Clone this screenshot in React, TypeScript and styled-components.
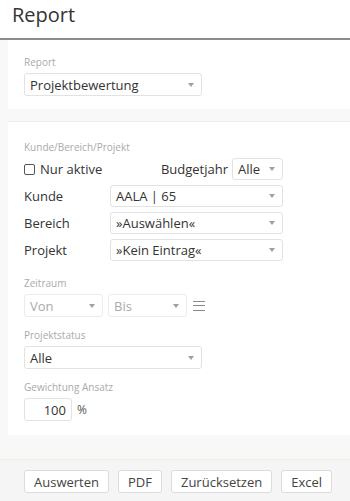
import React from 'react'
import styled, { createGlobalStyle } from 'styled-components'

const GlobalStyle = createGlobalStyle`
  html, body {
    margin: 0;
    padding: 0;
    background: #f8f8f8;
    font-family: 'Open Sans', 'Liberation Sans', sans-serif;
    color: #333;
  }
  * {
    box-sizing: border-box;
  }
`

const Page = styled.div`
  width: 350px;
  height: 501px;
  display: flex;
  flex-direction: column;
  overflow: hidden;
`

const Header = styled.header`
  height: 40px;
  background: #fff;
  border-bottom: 2px solid #8c8c8c;
  padding: 2px 0 0 12px;
`

const Title = styled.h1`
  margin: 0;
  font-size: 20px;
  font-weight: 400;
  line-height: 26px;
  color: #333;
`

const Main = styled.main`
  flex: 1;
  display: flex;
  flex-direction: column;
  padding-left: 8px;
`

const Card = styled.section<{ $top: number; $bottom: number; $first?: boolean }>`
  background: #fff;
  padding: ${(p) => p.$top}px 16px ${(p) => p.$bottom}px 16px;
  border-top: ${(p) => (p.$first ? 'none' : '1px solid #ececec')};
  margin-top: ${(p) => (p.$first ? 0 : 12)}px;
`

const FieldLabel = styled.div<{ $gap?: number }>`
  font-size: 10px;
  line-height: 12px;
  color: #aaa;
  margin-top: ${(p) => p.$gap ?? 0}px;
  margin-bottom: 5px;
`

const SelectBox = styled.div<{ $width: number; $height: number; $muted?: boolean }>`
  position: relative;
  width: ${(p) => p.$width}px;
  height: ${(p) => p.$height}px;
  border: 1px solid ${(p) => (p.$muted ? '#ececec' : '#e2e2e2')};
  border-radius: 3px;
  background: #fff;
  padding: 0 20px 0 5px;
  display: flex;
  align-items: center;
  font-size: 13px;
  color: ${(p) => (p.$muted ? '#aaa' : '#333')};
  white-space: nowrap;
`

const Caret = styled.span`
  position: absolute;
  right: 7px;
  top: 50%;
  margin-top: -2px;
  width: 0;
  height: 0;
  border-left: 3.5px solid transparent;
  border-right: 3.5px solid transparent;
  border-top: 4px solid #a0a0a0;
`

type SelectProps = { value: string; width: number; height?: number; muted?: boolean }

const Select = ({ value, width, height = 23, muted }: SelectProps) => (
  <SelectBox $width={width} $height={height} $muted={muted}>
    {value}
    <Caret />
  </SelectBox>
)

const FilterGrid = styled.div`
  display: grid;
  grid-template-columns: 86px 173px;
  grid-auto-rows: 22px;
  row-gap: 5px;
  align-items: center;
  width: 259px;
`

const TopRow = styled.div`
  grid-column: 1 / span 2;
  display: flex;
  align-items: center;
  height: 22px;
`

const CheckLabel = styled.label`
  display: flex;
  align-items: center;
  gap: 5px;
  font-size: 13px;
  color: #333;
  flex: 1;
`

const CheckBox = styled.span`
  width: 11px;
  height: 11px;
  border: 1px solid #555;
  border-radius: 2px;
  background: #fff;
`

const BudgetLabel = styled.span`
  font-size: 13px;
  color: #333;
  margin-right: 4px;
`

const RowLabel = styled.span`
  font-size: 13px;
  color: #333;
`

const Inline = styled.div`
  display: flex;
  align-items: center;
  gap: 5px;
`

const MenuIcon = styled.span`
  width: 12px;
  height: 10px;
  margin-left: 1px;
  border-top: 1.5px solid #8a8a8a;
  border-bottom: 1.5px solid #8a8a8a;
  position: relative;
  &::after {
    content: '';
    position: absolute;
    left: 0;
    right: 0;
    top: 3px;
    border-top: 1.5px solid #8a8a8a;
  }
`

const NumberInput = styled.div`
  width: 48px;
  height: 23px;
  border: 1px solid #e2e2e2;
  border-radius: 3px;
  display: flex;
  align-items: center;
  justify-content: flex-end;
  padding-right: 5px;
  font-size: 13px;
  color: #333;
`

const Unit = styled.span`
  font-size: 12px;
  color: #555;
`

const Footer = styled.footer`
  margin-top: auto;
  height: 42px;
  background: #f5f5f5;
  border-top: 1px solid #f1f1e2;
  padding: 10px 0 0 24px;
  display: flex;
  gap: 9px;
  align-items: flex-start;
`

const Button = styled.button`
  height: 23px;
  padding: 0 9px;
  background: #fff;
  border: 1px solid #dcdcdc;
  border-radius: 3px;
  font-family: inherit;
  font-size: 13px;
  color: #444;
`

export default function App() {
  return (
    <Page>
      <GlobalStyle />
      <Header>
        <Title>Report</Title>
      </Header>
      <Main>
        <Card $first $top={16} $bottom={13}>
          <FieldLabel>Report</FieldLabel>
          <Select value="Projektbewertung" width={178} />
        </Card>
        <Card $top={19} $bottom={14}>
          <FieldLabel>Kunde/Bereich/Projekt</FieldLabel>
          <FilterGrid>
            <TopRow>
              <CheckLabel>
                <CheckBox />
                Nur aktive
              </CheckLabel>
              <BudgetLabel>Budgetjahr</BudgetLabel>
              <Select value="Alle" width={51} height={22} />
            </TopRow>
            <RowLabel>Kunde</RowLabel>
            <Select value="AALA | 65" width={173} height={22} />
            <RowLabel>Bereich</RowLabel>
            <Select value="»Auswählen«" width={173} height={22} />
            <RowLabel>Projekt</RowLabel>
            <Select value="»Kein Eintrag«" width={173} height={22} />
          </FilterGrid>
          <FieldLabel $gap={16}>Zeitraum</FieldLabel>
          <Inline>
            <Select value="Von" width={79} muted />
            <Select value="Bis" width={79} muted />
            <MenuIcon />
          </Inline>
          <FieldLabel $gap={12}>Projektstatus</FieldLabel>
          <Select value="Alle" width={178} />
          <FieldLabel $gap={12}>Gewichtung Ansatz</FieldLabel>
          <Inline>
            <NumberInput>100</NumberInput>
            <Unit>%</Unit>
          </Inline>
        </Card>
      </Main>
      <Footer>
        <Button>Auswerten</Button>
        <Button>PDF</Button>
        <Button>Zurücksetzen</Button>
        <Button>Excel</Button>
      </Footer>
    </Page>
  )
}
